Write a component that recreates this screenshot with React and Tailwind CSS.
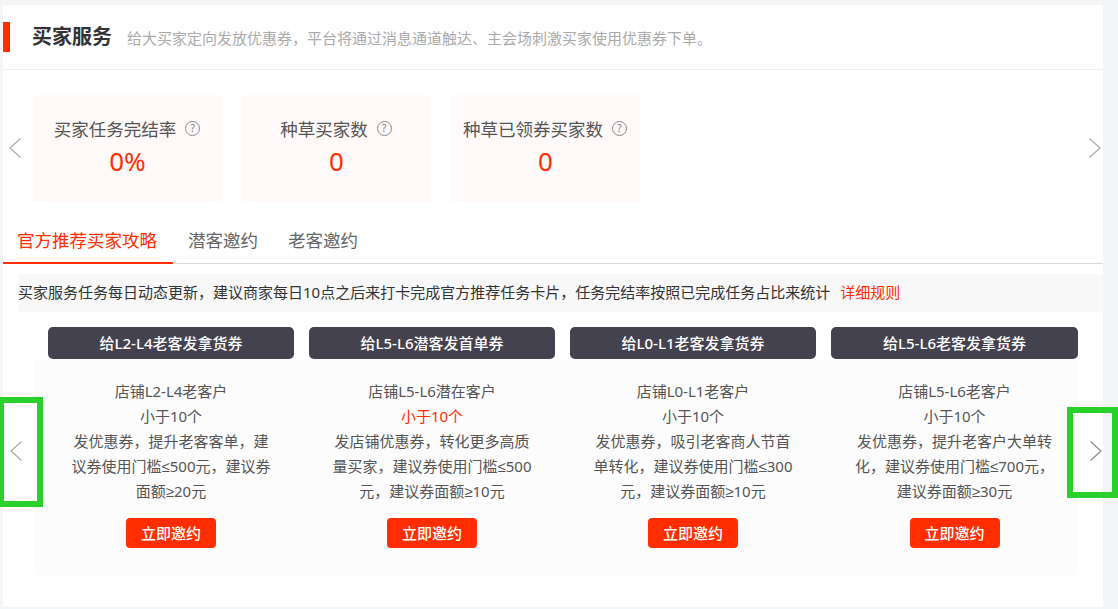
import React from "react";

const font = "font-['Noto_Sans','Noto_Sans_CJK_SC','Liberation_Sans',sans-serif]";

function Chevron({ dir, color = "#a9a9a9" }) {
  return (
    <svg width="12" height="20" viewBox="0 0 12 20" fill="none">
      <path d={dir === "left" ? "M11.5 0.5 L1 10 L11.5 19.5" : "M0.5 0.5 L11 10 L0.5 19.5"} stroke={color} strokeWidth="1.2" />
    </svg>
  );
}

function Help() {
  return (
    <span className="ml-[9px] mb-[2px] inline-flex h-[15px] w-[15px] items-center justify-center rounded-full border border-[#888] text-[10px] leading-none text-[#777]">?</span>
  );
}

function Stat({ title, value }) {
  return (
    <div className="flex h-[107px] w-[189px] flex-col items-center bg-[#fffaf9] pt-[21px]">
      <div className="-ml-px flex h-[26px] items-center text-[17.5px] leading-[26px] text-[#555] whitespace-nowrap">
        <span>{title}</span>
        <Help />
      </div>
      <div className="mt-[2px] text-[26px] leading-[34px] text-[#ff2d00]">{value}</div>
    </div>
  );
}

const cards = [
  {
    head: "给L2-L4老客发拿货券",
    lines: ["店铺L2-L4老客户", "小于10个", "发优惠券，提升老客客单，建", "议券使用门槛≤500元，建议券", "面额≥20元"],
  },
  {
    head: "给L5-L6潜客发首单券",
    lines: ["店铺L5-L6潜在客户", "小于10个", "发店铺优惠券，转化更多高质", "量买家，建议券使用门槛≤500", "元，建议券面额≥10元"],
    red: true,
  },
  {
    head: "给L0-L1老客发拿货券",
    lines: ["店铺L0-L1老客户", "小于10个", "发优惠券，吸引老客商人节首", "单转化，建议券使用门槛≤300", "元，建议券面额≥10元"],
  },
  {
    head: "给L5-L6老客发拿货券",
    lines: ["店铺L5-L6老客户", "小于10个", "发优惠券，提升老客户大单转", "化，建议券使用门槛≤700元，", "建议券面额≥30元"],
    last: true,
  },
];

function Line({ text }) {
  return text.split(/([≤≥])/).map((part, i) =>
    part === "≤" || part === "≥" ? (
      <span key={i} className="font-['Liberation_Sans',sans-serif]">{part}</span>
    ) : (
      <span key={i}>{part}</span>
    )
  );
}

function Card({ head, lines, red, last }) {
  return (
    <div className={"flex flex-col items-center " + (last ? "w-[247px]" : "w-[246px]")}>
      <div className="flex h-[32px] w-full items-center justify-center rounded-[5px] bg-[#44424f] text-[15px] font-medium text-white">{head}</div>
      <div className="mt-[20px] flex w-[214px] flex-col items-center text-center text-[15px] leading-[25px] text-[#555]">
        {lines.map((l, i) => (
          <div key={i} className={"whitespace-nowrap " + (red && i === 1 ? "text-[#ff2d00]" : "")}><Line text={l} /></div>
        ))}
      </div>
      <button className="mt-[14px] h-[30px] w-[90px] rounded-[4px] bg-[#ff2d00] text-[15px] font-medium text-white">立即邀约</button>
    </div>
  );
}

export default function App() {
  return (
    <div className={"h-[609px] w-[1118px] overflow-hidden bg-[#f4f5f7] pl-[3px] pt-[5px] " + font}>
      <div className="relative h-[602px] w-[1100px] bg-white">
        <div className="flex h-[65px] items-center border-b border-[#eeeeee]">
          <div className="h-[30px] w-[7px] bg-[#ff2d00]" />
          <div className="ml-[22px] text-[20px] font-bold text-[#333]">买家服务</div>
          <div className="ml-[15px] mt-[3px] text-[15px] text-[#aaaaaa]">给大买家定向发放优惠券，平台将通过消息通道触达、主会场刺激买家使用优惠券下单。</div>
        </div>

        <div className="mt-[25px] flex items-center">
          <div className="mb-[2px] flex w-[30px] justify-start pl-[6px]"><Chevron dir="left" /></div>
          <div className="flex gap-[20px]">
            <Stat title="买家任务完结率" value="0%" />
            <Stat title="种草买家数" value="0" />
            <Stat title="种草已领券买家数" value="0" />
          </div>
          <div className="mb-[2px] ml-auto mr-[2px] flex w-[12px] justify-center"><Chevron dir="right" /></div>
        </div>

        <div className="mt-[15px] flex h-[47px] items-stretch border-b border-[#d9d9d9]">
          <div className="-mb-px w-[170px] border-b-2 border-[#ff2d00] pl-[14px] pt-[10px] text-[17.5px] leading-[26px] text-[#ff2d00]">官方推荐买家攻略</div>
          <div className="ml-[15px] pt-[10px] text-[17.5px] leading-[26px] text-[#666]">潜客邀约</div>
          <div className="ml-[30px] pt-[10px] text-[17.5px] leading-[26px] text-[#666]">老客邀约</div>
        </div>

        <div className="ml-[15px] mt-[10px] flex h-[38px] items-center bg-[#f8f8f8] pb-[2px] text-[15px] text-[#333] whitespace-nowrap">
          <span>买家服务任务每日动态更新，建议商家每日10点之后来打卡完成官方推荐任务卡片，任务完结率按照已完成任务占比来统计</span>
          <span className="ml-[10px] text-[#ff2d00]">详细规则</span>
        </div>

        <div className="ml-[31px] mt-[15px] h-[249px] w-[1044px] rounded-b-[5px] bg-[linear-gradient(to_bottom,#ffffff_0,#ffffff_32px,#fcfcfc_32px)]">
          <div className="flex gap-[15px] pl-[14px]">
            {cards.map((c) => <Card key={c.head} {...c} />)}
          </div>
        </div>

        <div className="absolute left-[-5px] top-[392px] flex h-[110px] w-[45px] items-center justify-center border-[6px] border-[#2ad12a] pb-[2px] pr-[10px]">
          <Chevron dir="left" />
        </div>
        <div className="absolute left-[1064px] top-[402px] flex h-[91px] w-[51px] items-center justify-center border-[6px] border-[#2ad12a] pb-[4px] pl-[6px]">
          <Chevron dir="right" color="#8a8a8a" />
        </div>
      </div>
    </div>
  );
}
